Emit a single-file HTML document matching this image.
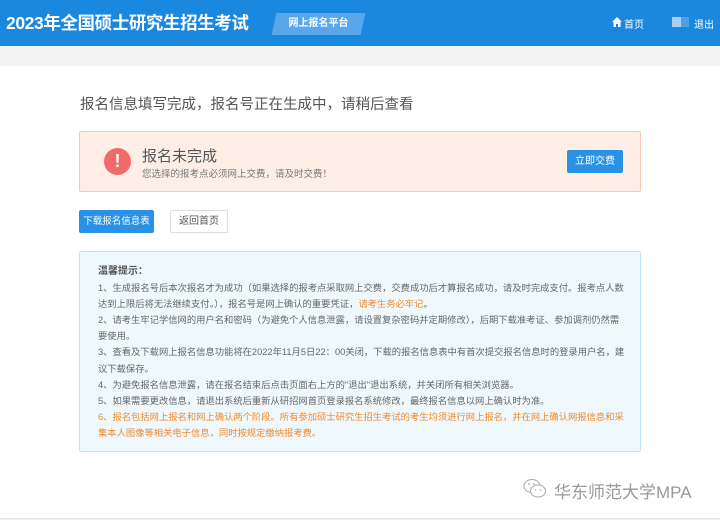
<!DOCTYPE html>
<html><head><meta charset="utf-8"><style>
*{margin:0;padding:0;box-sizing:border-box}
body{width:720px;height:520px;overflow:hidden;background:#f3f3f3;font-family:"Liberation Sans","Noto Sans CJK SC",sans-serif;position:relative}
.hd{position:absolute;left:0;top:0;width:720px;height:46px;background:#1b88df}
.ttl{position:absolute;left:6px;top:10px;color:#fff;font-size:17.5px;font-weight:bold;letter-spacing:-0.4px}
.badge{position:absolute;left:274px;top:13px;width:89px;height:22px;background:#58a7ea;transform:skewX(-12deg)}
.badge span{display:block;transform:skewX(12deg);color:#fff;font-size:10px;font-weight:bold;text-align:center;line-height:22px}
.nav{position:absolute;top:16px;color:#fff;font-size:10px}
.main{position:absolute;left:0;top:66px;width:720px;height:453px;background:#fff;border-bottom:1px solid #e4e4e4}
.h1{position:absolute;left:80px;top:93px;font-size:14.5px;color:#555}
.alert{position:absolute;left:79px;top:131px;width:562px;height:61px;background:#feeee6;border:1px solid #fbc8b0;border-radius:2px}
.ic{position:absolute;left:24px;top:16px;width:27px;height:27px;border-radius:50%;background:#f06a6a;color:#fff;font-weight:bold;font-size:18px;text-align:center;line-height:27px}
.btn{position:absolute;font-size:10px;text-align:center;border-radius:2px}
.info{position:absolute;left:79px;top:251px;width:562px;height:201px;background:#eff8fd;border:1px solid #bfe4f7;border-radius:2px}
.tx{position:absolute;left:18px;top:12px;width:530px;font-size:9.3px;color:#666;line-height:16.1px}
.tx div{white-space:nowrap}
.o{color:#f08a2c}
</style></head><body>
<div class="hd">
<div class="ttl">2023年全国硕士研究生招生考试</div>
<div class="badge"><span>网上报名平台</span></div>
<svg style="position:absolute;left:612px;top:17px" width="10" height="10" viewBox="0 0 10 10"><path d="M5 0L0 5h1.5v5h2.5V7h2v3h2.5V5H10z" fill="#fff"/></svg>
<div class="nav" style="left:624px">首页</div>
<div style="position:absolute;left:672px;top:17px;width:9px;height:10px;background:#a9d0f3"></div>
<div style="position:absolute;left:681px;top:17px;width:8px;height:10px;background:#4f9fe6"></div>
<div class="nav" style="left:694px">退出</div>
</div>
<div class="main"></div>
<div class="h1">报名信息填写完成，报名号正在生成中，请稍后查看</div>
<div class="alert">
<div class="ic">!</div>
<div style="position:absolute;left:62px;top:13px;font-size:15px;color:#555">报名未完成</div>
<div style="position:absolute;left:62px;top:34px;font-size:9.5px;color:#777">您选择的报考点必须网上交费，请及时交费！</div>
<div class="btn" style="left:487px;top:18px;width:56px;height:23px;line-height:23px;background:#2a92e4;color:#fff">立即交费</div>
</div>
<div class="btn" style="left:79px;top:210px;width:75px;height:23px;line-height:23px;background:#2a92e4;color:#fff;font-size:9.5px">下载报名信息表</div>
<div class="btn" style="left:170px;top:210px;width:58px;height:23px;line-height:21px;background:#fff;border:1px solid #ddd;color:#555">返回首页</div>
<div class="info"><div class="tx">
<div style="font-weight:bold;color:#555;font-size:10px">温馨提示：</div>
<div>1、生成报名号后本次报名才为成功（如果选择的报考点采取网上交费，交费成功后才算报名成功，请及时完成支付。报考点人数</div>
<div>达到上限后将无法继续支付。），报名号是网上确认的重要凭证，<span class="o">请考生务必牢记</span>。</div>
<div>2、请考生牢记学信网的用户名和密码（为避免个人信息泄露，请设置复杂密码并定期修改），后期下载准考证、参加调剂仍然需</div>
<div>要使用。</div>
<div>3、查看及下载网上报名信息功能将在2022年11月5日22：00关闭，下载的报名信息表中有首次提交报名信息时的登录用户名，建</div>
<div>议下载保存。</div>
<div>4、为避免报名信息泄露，请在报名结束后点击页面右上方的"退出"退出系统，并关闭所有相关浏览器。</div>
<div>5、如果需要更改信息，请退出系统后重新从研招网首页登录报名系统修改，最终报名信息以网上确认时为准。</div>
<div class="o">6、报名包括网上报名和网上确认两个阶段。所有参加硕士研究生招生考试的考生均须进行网上报名，并在网上确认网报信息和采</div>
<div class="o">集本人图像等相关电子信息，同时按规定缴纳报考费。</div>
</div></div>
<svg style="position:absolute;left:523px;top:478px" width="24" height="22" viewBox="0 0 24 22"><ellipse cx="9" cy="8" rx="8" ry="6.5" fill="none" stroke="#aaa" stroke-width="1"/><ellipse cx="15" cy="13" rx="7.5" ry="6" fill="#fff" stroke="#aaa" stroke-width="1"/><circle cx="6" cy="6" r="0.9" fill="#aaa"/><circle cx="11" cy="6" r="0.9" fill="#aaa"/><circle cx="12.5" cy="12" r="0.8" fill="#aaa"/><circle cx="17.5" cy="12" r="0.8" fill="#aaa"/></svg>
<div style="position:absolute;left:554px;top:478px;font-size:17px;color:#999">华东师范大学MPA</div>
</body></html>
